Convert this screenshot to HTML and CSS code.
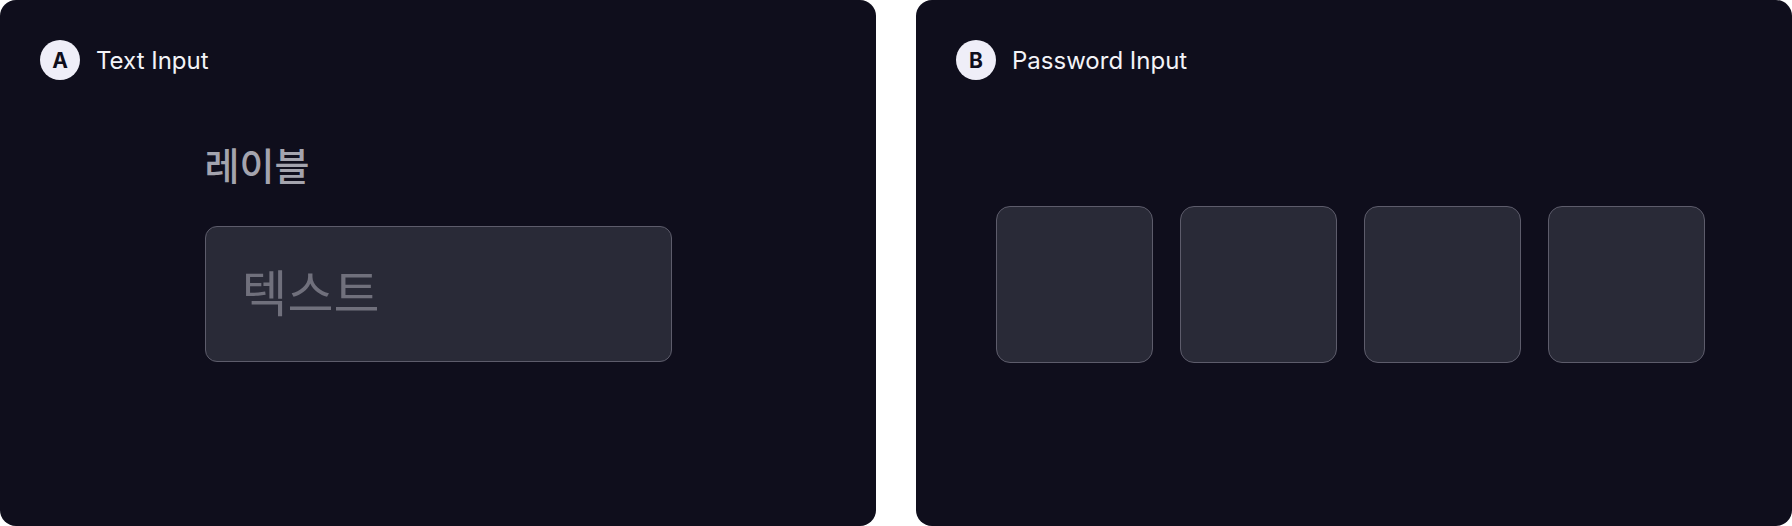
FILE: index.html
```html
<!DOCTYPE html>
<html lang="ko">
<head>
<meta charset="utf-8">
<link rel="stylesheet" href="styles.css">
</head>
<body>
<div class="page">
  <section class="panel">
    <header class="panel-head">
      <span class="badge">A</span>
      <span class="title">Text Input</span>
    </header>
    <div class="body body-text">
      <div class="field">
        <div class="label">레이블</div>
        <div class="input"><span class="placeholder">텍스트</span></div>
      </div>
    </div>
  </section>
  <section class="panel">
    <header class="panel-head">
      <span class="badge">B</span>
      <span class="title">Password Input</span>
    </header>
    <div class="body body-pass">
      <div class="pin-row">
        <div class="pin"></div>
        <div class="pin"></div>
        <div class="pin"></div>
        <div class="pin"></div>
      </div>
    </div>
  </section>
</div>
</body>
</html>
```
FILE: styles.css
```css
html, body {
  margin: 0;
  padding: 0;
  background: #ffffff;
}
body {
  font-family: Inter, "Noto Sans CJK KR", sans-serif;
}
.page {
  display: flex;
  gap: 40px;
  width: 1792px;
  height: 526px;
}
.panel {
  flex: 1;
  background: #0f0e1c;
  border-radius: 16px;
  padding: 40px;
  box-sizing: border-box;
  display: flex;
  flex-direction: column;
}
.panel-head {
  display: flex;
  align-items: center;
  gap: 16px;
  height: 40px;
}
.badge {
  width: 40px;
  height: 40px;
  border-radius: 50%;
  background: #efeef8;
  color: #0f0e1c;
  font-weight: 700;
  font-size: 21px;
  display: flex;
  align-items: center;
  justify-content: center;
}
.title {
  color: #f3f3f7;
  font-size: 24px;
  font-weight: 400;
}
.body {
  display: flex;
}
.body-text {
  justify-content: center;
  padding-top: 60px;
}
.field {
  width: 467px;
  display: flex;
  flex-direction: column;
  gap: 38px;
}
.label {
  font-family: "Noto Sans CJK KR", sans-serif;
  font-size: 38px;
  line-height: 48px;
  color: #a4a4ae;
  font-weight: 500;
}
.input {
  height: 136px;
  box-sizing: border-box;
  border: 1.5px solid #5d5c6b;
  border-radius: 12px;
  background: #292a37;
  display: flex;
  align-items: center;
  padding-left: 36px;
  padding-bottom: 8px;
}
.placeholder {
  font-family: "Noto Sans CJK KR", sans-serif;
  font-size: 50px;
  font-weight: 400;
  color: #70707c;
}
.body-pass {
  padding-top: 126px;
  padding-left: 40px;
}
.pin-row {
  display: flex;
  gap: 27px;
}
.pin {
  width: 157px;
  height: 157px;
  box-sizing: border-box;
  border: 1.5px solid #5d5c6b;
  border-radius: 14px;
  background: #292a37;
}
```
